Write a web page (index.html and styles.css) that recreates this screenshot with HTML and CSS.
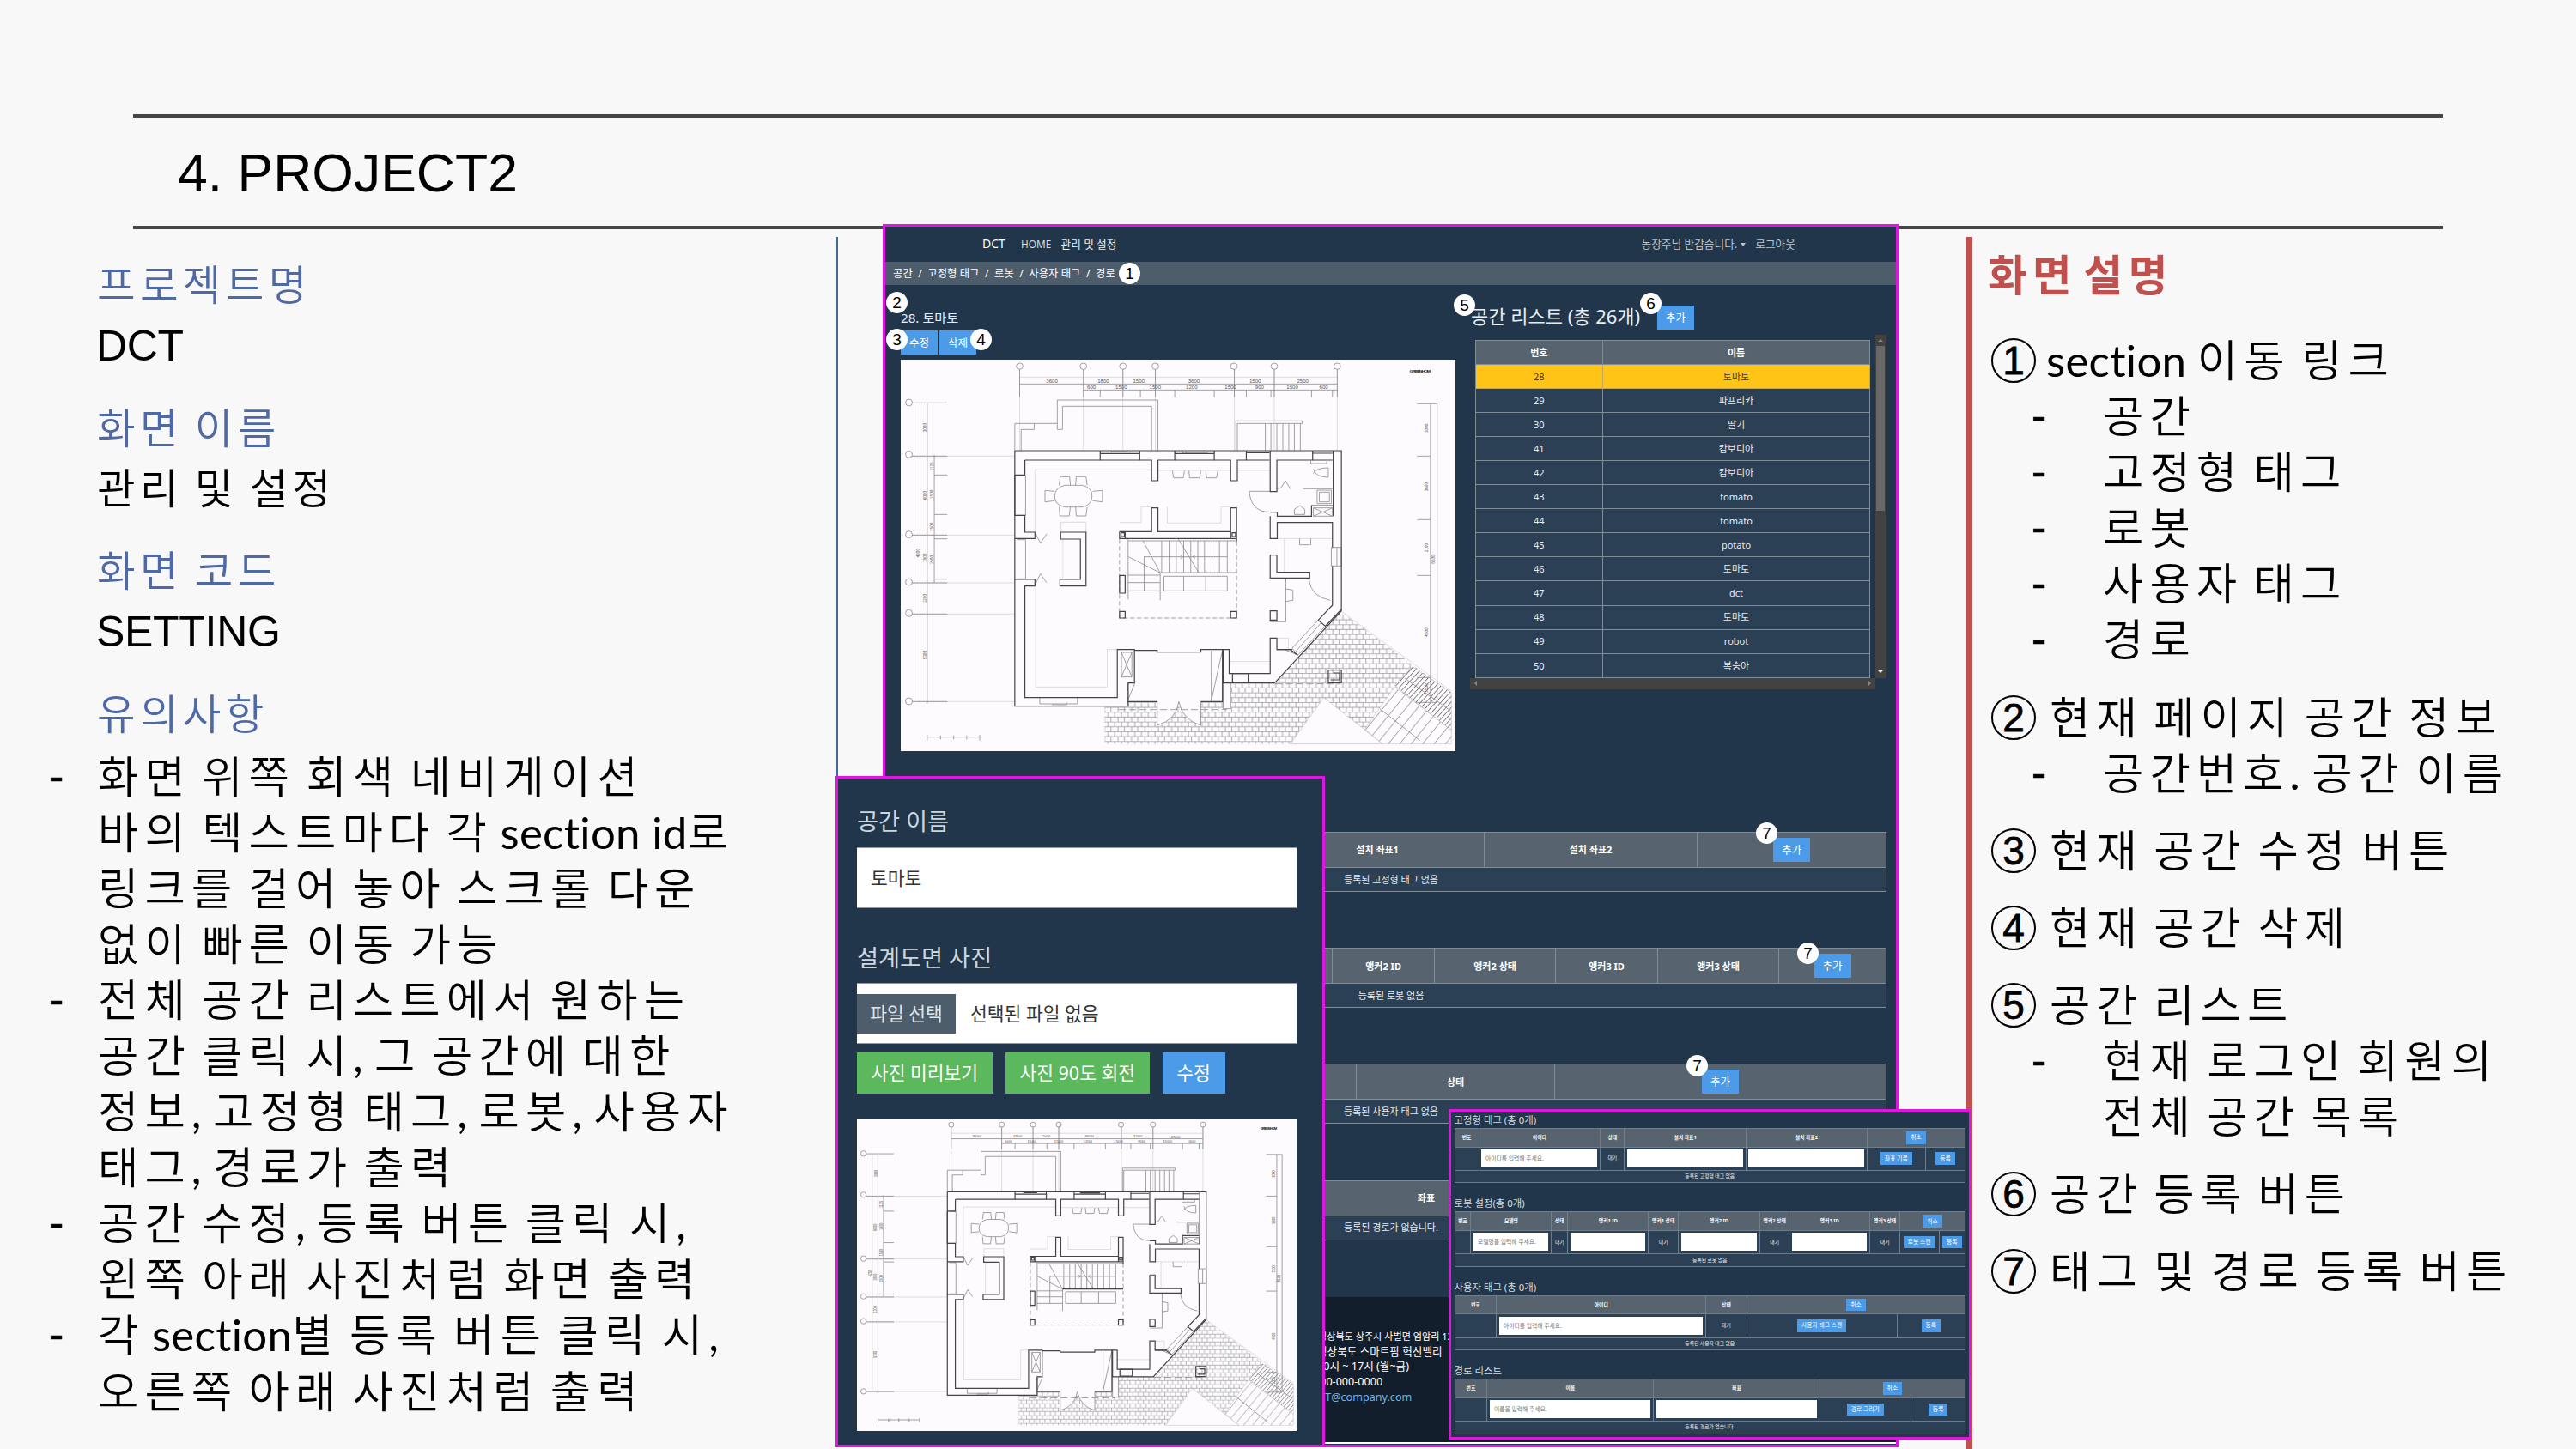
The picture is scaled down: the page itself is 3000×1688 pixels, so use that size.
FILE: index.html
```html
<!DOCTYPE html>
<html lang="ko">
<head>
<meta charset="utf-8">
<title>4. PROJECT2</title>
<link rel="stylesheet" href="styles.css">
</head>
<body>
<svg class="defs" width="0" height="0" aria-hidden="true">
  <defs>
    <pattern id="bricks" width="36" height="34" patternUnits="userSpaceOnUse">
      <path d="M0 1H36M0 18H36M7 1V18M25 1V18M16 18V34M33 18V34" fill="none" stroke="#777" stroke-width="1.6"/>
    </pattern>
    <pattern id="planks" width="26" height="26" patternUnits="userSpaceOnUse" patternTransform="rotate(32)">
      <path d="M1 0V26" stroke="#888" stroke-width="2"/>
    </pattern>
    <pattern id="hatch" width="11" height="11" patternUnits="userSpaceOnUse" patternTransform="rotate(35)">
      <path d="M1 0V11" stroke="#777" stroke-width="2.4"/>
    </pattern>
    <symbol id="plan" viewBox="45 27 1488 1368" preserveAspectRatio="none">
      <rect x="45" y="27" width="1488" height="1368" fill="#fdfbfe"/>
      <path d="M592 1240H655V1225H910V1247H930V1160L1050 1158L1225 905L1522 1195V1370H592Z" fill="url(#bricks)"/>
      <path d="M1180 1208L1338 1370H1090Z" fill="#fdfbfe" stroke="#999"/>
      <path d="M1418 1100L1522 1190V1322L1370 1165Z" fill="#fdfbfe"/>
      <path d="M1418 1100L1522 1190V1322L1370 1165Z" fill="url(#hatch)" stroke="#999"/>
      <path d="M1370 1170L1522 1322V1370H1338L1290 1318Z" fill="#fdfbfe"/>
      <path d="M1370 1170L1522 1322V1370H1338L1290 1318Z" fill="url(#planks)" stroke="#aaa"/>
      <g class="ink faint">
        <path d="M364 88H1216M364 60V345M535 60V345M641 60V345M728 60V345M940 60V345M1047 60V345M1216 60V345"/>
        <path d="M75 364H350M75 640H350M75 807H350M75 916H350M75 1222H350M97 178V1222M405 412H717M735 414H930M948 414H1036M405 412V630M407 820V1171H599V1040H626M632 596H690V541H718M760 541V598H904V541H930M475 630V595H542V630M1055 652H1203M1074 652V770M480 652V795M924 1082H1036M1055 1000H1085V1040"/>
        <path d="M1225 905L1522 1185"/>
      </g>
      <g class="ink mid">
        <path d="M364 112H1216M535 133H1216M364 60V158M535 60V158M580 133V158M641 60V158M688 133V158M728 60V158M780 133V158M886 133V158M940 60V158M972 133V158M1038 133V158M1047 60V158M1147 133V158M1203 133V158M1216 60V158"/>
        <path d="M75 178H170M116 178V1230M135 360V807M75 364H170M135 430H170M135 568H170M75 640H170M135 653H170M135 794H170M75 807H170M75 916H170M75 1222H170"/>
        <path d="M1430 181H1484V1225H1430M1466 181V1225M1430 364H1466M1430 586H1466M1430 781H1466M1430 1138H1466"/>
        <path d="M351 345V250H465V168H735V345M368 345V271H403V250M465 250V271H479V190H718V345"/>
        <path d="M944 345V241H1122V250H948V345M1023 250V345M1038 250V345M1054 250V345M1070 250V345M1086 250V345M1101 250V345M1117 250V345"/>
        <path d="M116 1346H257M116 1338V1358M152 1340V1354M187 1340V1354M222 1340V1354M257 1338V1358"/>
        <path d="M470 466L473 436H498L500 466M514 466L516 436H542L545 466M470 542L472 573H497L500 542M514 542L516 573H542L545 542M458 487L432 484V524L458 520M560 487L586 484V524L560 520"/>
        <path d="M485 466H532Q560 474 558 505Q558 535 532 542H485Q458 535 458 505Q458 474 485 466Z"/>
        <path d="M774 415L777 440H803L806 415M818 415L820 440H847L850 415M863 415L866 440H892L896 415"/>
        <path d="M980 487H1036M980 487Q984 558 1034 560M1055 478L1065 475L1077 450L1090 478M1125 478H1203M1152 409Q1158 438 1192 438V405Q1158 405 1152 425M1145 380V390H1188V380M1162 483H1200V530H1162ZM1168 490H1195V524H1168ZM1101 568V550L1116 537L1129 550V568Z"/>
        <path d="M405 630L420 668L437 635M405 815L420 775L436 806"/>
        <path d="M1115 652V674H1145V652M1078 790V943H1036M1078 828L1097 832V868L1078 872M1140 795Q1145 855 1197 868M655 655V865M741 772V868M655 780H741M655 806H741M655 835H741M698 715V835M656 660H946M656 716L741 772M695 660L741 772M790 655L845 772"/>
        <path d="M745 660V770M765 660V770M784 660V770M804 660V770M823 660V770M842 660V770M860 660V770M880 660V770M900 660V770M921 660V770M698 716H921M795 710L802 716L795 722M835 710L828 716L835 722"/>
        <path d="M751 784H921V835H751ZM804 784V835M863 784V835"/>
        <path d="M637 1050H665V1136H637ZM637 1050L665 1136M665 1050L637 1136M878 1045V1220L907 1048M655 1158V1225M673 1158L655 1215"/>
        <path d="M733 1222V1305Q785 1285 791 1222M850 1222V1305Q800 1285 791 1222" fill="#fdfbfe"/>
        <path d="M1165 937L1095 1035L1110 1060L1184 958M1172 948L1104 1048M1330 1247L1438 1358M1397 1140L1520 1254"/>
        <path d="M632 655V930H946V655" stroke-dasharray="5 3"/>
        <path d="M630 1250H920M1050 1160H1225" stroke-dasharray="8 4"/>
        <path d="M357 432H380V571H357M357 656H380V793H357M1200 683H1227V748H1200ZM1215 683V748M418 1208V1230H519V1208M450 1233H490V1225"/>
        <path d="M910 1157V1247H930V1157M1152 545H1203V574H1152ZM1152 545L1203 574M1203 545L1152 574M1075 1040L1110 1060"/>
      </g>
      <g class="ink wall">
        <path d="M351 345H1227V905L1048 1157H910V1040H926V1124H1036V1000H1054V1040H1095M351 345V1238H655V1222M378 378V430H351M378 378H580V345M686 345V378H718V450H735V378H780V345M886 345V378H930V450H948V378H972V345M1036 345V488H1054V378H1150V345M1205 345V574"/>
        <path d="M580 355H686M608 349H655M780 355H886M800 350H868M972 352H1034M1150 354H1203M580 378H686M780 378H886M972 378H1034M1150 378H1203"/>
        <path d="M351 430V571H378V630H405V652H351M351 793V795H405V818H378V1208H626V1040H672V1157H655V1222H733M850 1222H908V1040M672 1043H733V1049H850V1040H910M474 630H542V818H472V795H527V654H474Z"/>
        <path d="M632 628H718V545H735V628H930V545H946V662M632 628V652H946M632 628H647V650M930 628V650M636 632H645V645H636ZM934 632H943V645H934Z"/>
        <path d="M632 781H647V843H632ZM632 907H647V930H632ZM930 907H946V930H930ZM1036 905H1054V937H1036ZM741 772H946"/>
        <path d="M1036 560H1055V574H1147V537H1203M1036 574V652H1055V596H1203V683M1036 710H1054V770H1142V790H1036V710M1203 748V885L1165 937L1184 958L1227 900M1054 1040H1090L1110 1060M935 1124H977V1154H935ZM1192 1112H1227V1156H1192ZM1205 1122H1222V1146H1198"/>
      </g>
      <g class="ink mid" fill="#fdfbfe">
        <ellipse cx="364" cy="50" rx="9" ry="11"/><ellipse cx="535" cy="50" rx="9" ry="11"/><ellipse cx="641" cy="50" rx="9" ry="11"/><ellipse cx="728" cy="50" rx="9" ry="11"/><ellipse cx="939" cy="50" rx="9" ry="11"/><ellipse cx="1047" cy="50" rx="9" ry="11"/><ellipse cx="1216" cy="50" rx="9" ry="11"/>
        <ellipse cx="67" cy="177" rx="9" ry="12"/><ellipse cx="67" cy="358" rx="9" ry="12"/><ellipse cx="67" cy="638" rx="9" ry="12"/><ellipse cx="67" cy="804" rx="9" ry="12"/><ellipse cx="67" cy="913" rx="9" ry="12"/><ellipse cx="67" cy="1221" rx="9" ry="12"/>
      </g>
      <g class="dims">
        <text x="435" y="108">3600</text><text x="573" y="108">1800</text><text x="668" y="108">1500</text><text x="816" y="108">3600</text><text x="980" y="108">1500</text><text x="1108" y="109">2500</text>
        <text x="545" y="130">600</text><text x="621" y="130">1500</text><text x="712" y="130">1500</text><text x="810" y="130">1200</text><text x="914" y="130">1500</text><text x="996" y="130">900</text><text x="1080" y="130">1500</text><text x="1168" y="130">600</text>
        <text transform="translate(114 280) rotate(-90)">3000</text><text transform="translate(132 415) rotate(-90)">1125</text><text transform="translate(113 517) rotate(-90)">6000</text><text transform="translate(132 513) rotate(-90)">1500</text><text transform="translate(132 627) rotate(-90)">1500</text><text transform="translate(95 718) rotate(-90)">4200</text><text transform="translate(113 735) rotate(-90)">1800</text><text transform="translate(132 742) rotate(-90)">1500</text><text transform="translate(113 877) rotate(-90)">1200</text><text transform="translate(113 1075) rotate(-90)">5300</text>
        <text transform="translate(1460 282) rotate(-90)">3000</text><text transform="translate(1460 487) rotate(-90)">3600</text><text transform="translate(1460 700) rotate(-90)">2100</text><text transform="translate(1478 740) rotate(-90)">8100</text><text transform="translate(1460 995) rotate(-90)">4500</text><text transform="translate(1460 1190) rotate(-90)">1500</text>
        <text class="strong" x="1410" y="73">GREENHOM</text>
      </g>
    </symbol>
  </defs>
</svg>

<div class="slide">
  <header class="title">4. PROJECT2</header>

  <div class="columns">
    <aside class="info">
      <dl>
        <dt>프로젝트명</dt><dd class="latin">DCT</dd>
        <dt>화면 이름</dt><dd>관리 및 설정</dd>
        <dt>화면 코드</dt><dd class="latin">SETTING</dd>
        <dt>유의사항</dt>
      </dl>
      <ul class="notes">
        <li>화면 위쪽 회색 네비게이션<br>바의 텍스트마다 각 <span class="en">section id</span>로<br>링크를 걸어 놓아 스크롤 다운<br>없이 빠른 이동 가능</li>
        <li>전체 공간 리스트에서 원하는<br>공간 클릭 시<span class="c">,</span> 그 공간에 대한<br>정보<span class="c">,</span> 고정형 태그<span class="c">,</span> 로봇<span class="c">,</span> 사용자<br>태그<span class="c">,</span> 경로가 출력</li>
        <li>공간 수정<span class="c">,</span> 등록 버튼 클릭 시<span class="c">,</span><br>왼쪽 아래 사진처럼 화면 출력</li>
        <li>각 <span class="en">section</span>별 등록 버튼 클릭 시<span class="c">,</span><br>오른쪽 아래 사진처럼 출력</li>
      </ul>
    </aside>

    <aside class="legend">
      <h2>화면 설명</h2>
      <ol>
        <li><b class="num">1</b><span class="en">section</span> 이동 링크
          <ul><li>공간</li><li>고정형 태그</li><li>로봇</li><li>사용자 태그</li><li>경로</li></ul></li>
        <li><b class="num">2</b>현재 페이지 공간 정보
          <ul><li>공간번호<span class="c">.</span> 공간 이름</li></ul></li>
        <li><b class="num">3</b>현재 공간 수정 버튼</li>
        <li><b class="num">4</b>현재 공간 삭제</li>
        <li><b class="num">5</b>공간 리스트
          <ul><li>현재 로그인 회원의<br>전체 공간 목록</li></ul></li>
        <li><b class="num">6</b>공간 등록 버튼</li>
        <li><b class="num">7</b>태그 및 경로 등록 버튼</li>
      </ol>
    </aside>
  </div>

  <section class="window main">
    <nav class="nav">
      <span class="brand">DCT</span><span class="home">HOME</span><span class="here">관리 및 설정</span>
      <span class="hello">농장주님 반갑습니다.</span><i class="caret"></i><span class="logout">로그아웃</span>
    </nav>
    <div class="crumbs">공간&nbsp; /&nbsp; 고정형 태그&nbsp; /&nbsp; 로봇&nbsp; /&nbsp; 사용자 태그&nbsp; /&nbsp; 경로</div>
    <div class="top">
      <div class="space">
        <h3>28. 토마토</h3>
        <div class="btns"><span class="btn">수정</span><span class="btn">삭제</span></div>
        <svg class="plan"><use href="#plan"/></svg>
      </div>
      <div class="list">
        <div class="head"><h3>공간 리스트 (총 26개)</h3><span class="btn">추가</span></div>
        <div class="scroller">
          <div class="rows">
            <div class="th">번호</div><div class="th">이름</div>
            <div class="on">28</div><div class="on">토마토</div>
            <div>29</div><div>파프리카</div>
            <div>30</div><div>딸기</div>
            <div>41</div><div>캄보디아</div>
            <div>42</div><div>캄보디아</div>
            <div>43</div><div>tomato</div>
            <div>44</div><div>tomato</div>
            <div>45</div><div>potato</div>
            <div>46</div><div>토마토</div>
            <div>47</div><div>dct</div>
            <div>48</div><div>토마토</div>
            <div>49</div><div>robot</div>
            <div>50</div><div>복숭아</div>
          </div>
          <div class="vbar"><i class="up"></i><i class="thumb"></i><i class="down"></i></div>
          <div class="hbar"><i class="left"></i><i class="right"></i></div>
        </div>
      </div>
    </div>
    <div class="tables">
      <div class="tbl m1"><div class="th"></div><div class="th">설치 좌표1</div><div class="th">설치 좌표2</div><div class="th"><span class="btn">추가</span></div><div class="full">등록된 고정형 태그 없음</div></div>
      <div class="tbl m2"><div class="th"></div><div class="th">앵커2 ID</div><div class="th">앵커2 상태</div><div class="th">앵커3 ID</div><div class="th">앵커3 상태</div><div class="th"><span class="btn">추가</span></div><div class="full">등록된 로봇 없음</div></div>
      <div class="tbl m3"><div class="th"></div><div class="th">상태</div><div class="th"><span class="btn">추가</span></div><div class="full">등록된 사용자 태그 없음</div></div>
      <div class="tbl m4"><div class="th"></div><div class="th">좌표</div><div class="th"></div><div class="full">등록된 경로가 없습니다.</div></div>
    </div>
    <footer class="foot">
      <p class="addr">경상북도 상주시 사벌면 엄암리 13</p>
      <p>경상북도 스마트팜 혁신밸리</p>
      <p>10시 ~ 17시 (월~금)</p>
      <p class="tel">000-000-0000</p>
      <p class="mail">BT@company.com</p>
    </footer>
    <i class="badge b1">1</i><i class="badge b2">2</i><i class="badge b3">3</i><i class="badge b4">4</i><i class="badge b5">5</i><i class="badge b6">6</i><i class="badge b7">7</i><i class="badge b8">7</i><i class="badge b9">7</i>
  </section>

  <section class="window form">
    <h4>공간 이름</h4>
    <div class="field">토마토</div>
    <h4 class="second">설계도면 사진</h4>
    <div class="field file"><span class="pick">파일 선택</span><span>선택된 파일 없음</span></div>
    <div class="actions"><span class="ok">사진 미리보기</span><span class="ok wide">사진 90도 회전</span><span class="edit">수정</span></div>
    <svg class="plan"><use href="#plan"/></svg>
  </section>

  <section class="window inset">
    <h5>고정형 태그 (총 0개)</h5>
    <div class="tbl s1">
      <div class="th">번호</div><div class="th">아이디</div><div class="th">상태</div><div class="th">설치 좌표1</div><div class="th">설치 좌표2</div><div class="th two"><span class="btn">취소</span></div>
      <div></div><div class="in"><p>아이디를 입력해 주세요.</p></div><div>대기</div><div class="in"><p></p></div><div class="in"><p></p></div><div><span class="btn">좌표 기록</span></div><div><span class="btn">등록</span></div>
      <div class="full">등록된 고정형 태그 없음</div>
    </div>
    <h5>로봇 설정(총 0개)</h5>
    <div class="tbl s2">
      <div class="th">번호</div><div class="th">모델명</div><div class="th">상태</div><div class="th">앵커1 ID</div><div class="th">앵커1 상태</div><div class="th">앵커2 ID</div><div class="th">앵커2 상태</div><div class="th">앵커3 ID</div><div class="th">앵커3 상태</div><div class="th two"><span class="btn">취소</span></div>
      <div></div><div class="in"><p>모델명을 입력해 주세요.</p></div><div>대기</div><div class="in"><p></p></div><div>대기</div><div class="in"><p></p></div><div>대기</div><div class="in"><p></p></div><div>대기</div><div><span class="btn">로봇 스캔</span></div><div><span class="btn">등록</span></div>
      <div class="full">등록된 로봇 없음</div>
    </div>
    <h5>사용자 태그 (총 0개)</h5>
    <div class="tbl s3">
      <div class="th">번호</div><div class="th">아이디</div><div class="th">상태</div><div class="th two"><span class="btn">취소</span></div>
      <div></div><div class="in"><p>아이디를 입력해 주세요.</p></div><div>대기</div><div><span class="btn">사용자 태그 스캔</span></div><div><span class="btn">등록</span></div>
      <div class="full">등록된 사용자 태그 없음</div>
    </div>
    <h5>경로 리스트</h5>
    <div class="tbl s4">
      <div class="th">번호</div><div class="th">이름</div><div class="th">좌표</div><div class="th two"><span class="btn">취소</span></div>
      <div></div><div class="in"><p>이름을 입력해 주세요.</p></div><div class="in"><p></p></div><div><span class="btn">경로 그리기</span></div><div><span class="btn">등록</span></div>
      <div class="full">등록된 경로가 없습니다.</div>
    </div>
  </section>
</div>
</body>
</html>
```
FILE: styles.css
```css
* { box-sizing: border-box; margin: 0; padding: 0; }
ul, ol { list-style: none; }
i { font-style: normal; }
body { background: #f8f8f8; color: #000; overflow: hidden; }
.defs { position: absolute; }

.slide { position: relative; width: 3000px; height: 1688px; overflow: hidden; padding-top: 133px; }

.title {
  margin: 0 155px; height: 134px; padding-left: 52px;
  border-top: 4px solid #454545; border-bottom: 4px solid #454545;
  font: 62.5px/128px "Liberation Sans", sans-serif;
}

.columns { display: flex; justify-content: space-between; margin-top: 9px; height: 1412px; }

/* left column */
.info { width: 976px; height: 700px; border-right: 2px solid #41699c; padding: 20px 0 0 113px; }
.info dl { font: 350 48.5px/70px Lato, "Noto Sans CJK KR", sans-serif; letter-spacing: 5.3px; word-spacing: -4.5px; white-space: nowrap; }
.info dt { height: 70px; color: #4f69a6; }
.info dd { height: 70px; margin-bottom: 26.5px; }
.info dd.latin { font: 50px/74px "Liberation Sans", sans-serif; letter-spacing: -0.3px; margin-left: -1px; }
.notes { margin-top: 6px; }
.notes, .legend ol { font: 350 51.5px/65.1px Lato, "Noto Sans CJK KR", sans-serif; letter-spacing: 7px; word-spacing: -8.5px; white-space: nowrap; }
.notes li, .legend ol ul li { position: relative; }
.notes li { padding-left: 1px; }
.notes li::before { content: "-"; position: absolute; left: -57px; font-weight: 400; -webkit-text-stroke: .6px #000; }
.en { font-weight: 400; font-size: 51px; line-height: 1; letter-spacing: .3px; word-spacing: 0; margin-left: -4px; }
.c { letter-spacing: 1px; font-weight: 400; }

/* right column */
.legend { width: 710px; border-left: 7px solid #c0504d; padding: 11px 0 0 18px; }
.legend h2 { font: 700 49.5px/66px Lato, "Noto Sans CJK KR", sans-serif; letter-spacing: 6.5px; word-spacing: -11px; color: #c0504d; height: 100px; }
.legend ol > li { margin-bottom: 25px; padding-left: 4px; }
.legend ol ul { padding-left: 130px; }
.legend ol ul li::before { content: "-"; position: absolute; left: -84px; font-weight: 400; -webkit-text-stroke: .6px #000; }
.num {
  display: inline-block; width: 52px; height: 52px; margin: -8px 16px -8px 0; border: 2px solid #000; border-radius: 50%;
  font: 400 46px/48px "Liberation Sans", sans-serif; letter-spacing: 0; text-align: center; vertical-align: 3px;
  -webkit-text-stroke: .8px #000;
}

/* captured windows */
.window { position: absolute; border: 3px solid #e015e0; background: #21364a; color: #e8edf2; font: 11px/1.2 "Noto Sans", "Noto Sans CJK KR", sans-serif; white-space: nowrap; overflow: hidden; }
.btn { display: inline-flex; align-items: center; justify-content: center; background: #4c9be8; color: #fff; }
.plan { display: block; }
.ink * { vector-effect: non-scaling-stroke; }
.ink { fill: none; }
.faint { stroke: #d3d0d4; stroke-width: .7px; }
.mid { stroke: #8b898d; stroke-width: .8px; }
.wall { stroke: #454347; stroke-width: 1.2px; }
.dims { font: 14px "Liberation Sans", sans-serif; fill: #555; }
.dims .strong { font-size: 12px; font-weight: 700; letter-spacing: -2px; fill: #111; }

.tbl, .rows { display: grid; border: solid #7f8d99; border-width: 1px 0 0 1px; }
.tbl > div, .rows > div { min-width: 0; display: flex; align-items: center; justify-content: center; background: #2b4055; border: solid #7f8d99; border-width: 0 1px 1px 0; overflow: hidden; }
.tbl > .th, .rows > .th { background: #576470; font-weight: 700; color: #fff; }
.tbl > .full { grid-column: 1 / -1; }
.tbl > .two { grid-column: span 2; }

/* management page */
.main { left: 1028px; top: 261px; width: 1183px; height: 1425px; background: #21364a; }
.nav { display: flex; align-items: center; height: 41px; padding-left: 113px; font-size: 12.7px; color: #d6dce2; }
.brand { width: 45px; font-size: 14px; color: #fff; }
.home { width: 46.5px; font-size: 11.8px; }
.here { color: #e8edf2; }
.hello { margin-left: 611px; color: #bcc5ce; }
.caret { border: 3px solid transparent; border-top: 4px solid #bcc5ce; border-bottom: 0; margin: 0 11px 0 4px; }
.logout { color: #bcc5ce; }
.crumbs { height: 27px; padding-left: 9px; background: #4e5d6c; font-size: 12.4px; line-height: 27px; color: #fff; }
.top { display: flex; height: 637px; }
.space { width: 681px; padding: 28px 0 0 18px; }
.space h3 { font-size: 15.2px; font-weight: 400; line-height: 20px; height: 25px; }
.btns { display: flex; gap: 2px; margin-bottom: 6px; }
.main .btn { width: 43px; height: 28px; font-size: 12.5px; font-weight: 400; }
.space .plan { width: 646px; height: 456px; }
.head { display: flex; padding: 24px 0 0 1px; height: 58px; }
.head h3 { width: 217px; font-size: 22px; font-weight: 400; line-height: 24px; }
.scroller { display: grid; grid-template: 400px 12.5px / 471.5px 13px; }
.rows { margin: 6px 5.5px 0 5.5px; grid-template-columns: 148.5px 1fr; grid-auto-rows: 28.05px; overflow: hidden; height: 394px; }
.rows > .on { background: #ffc415; color: #4a3c14; border-color: #c0a760; }
.vbar { background: #424242; display: flex; flex-direction: column; align-items: center; }
.thumb { width: 9.5px; height: 192px; background: #686868; margin-bottom: auto; }
.up { border: 3px solid transparent; border-bottom-color: #888; margin: 2px 0 5px; }
.down { border: 3px solid transparent; border-top-color: #eee; margin-bottom: 3px; }
.hbar { background: #424242; display: flex; justify-content: space-between; align-items: center; padding: 0 2px; }
.left { border: 3px solid transparent; border-right-color: #888; }
.right { border: 3px solid transparent; border-left-color: #888; }
.tables { height: 542px; padding: 0 11px 0 12px; display: flex; flex-direction: column; gap: 66.2px; }
.tables .tbl { grid-template-rows: 41px 28px; height: 69px; flex: none; }
.m1 { grid-template-columns: 436.5fr 249fr 248.2fr 220.1fr; }
.m2 { grid-template-columns: 508.6fr 118.8fr 141.3fr 118.8fr 141.3fr 125fr; }
.m3 { grid-template-columns: 536.3fr 231.5fr 386fr; }
.m4 { grid-template-columns: 461fr 314fr 379fr; }
.foot { height: 171px; border-bottom: 2px solid #fff; background: #121e2b; padding: 37px 0 0 503px; font-size: 12.6px; line-height: 17.6px; color: #fff; }
.foot .addr { font-size: 11.1px; padding-left: 1px; }
.foot .tel { margin-left: -4px; }
.foot .mail { color: #69b7ef; padding: 1px 0 0 1px; }
.badge { position: absolute; width: 25px; height: 25px; border-radius: 50%; background: #fff; color: #000; font: 19px/25px "Liberation Sans", sans-serif; text-align: center; }
.b1 { left: 272px; top: 42px; }
.b2 { left: 1px; top: 76px; }
.b3 { left: 1px; top: 119px; }
.b4 { left: 99px; top: 119px; }
.b5 { left: 662px; top: 79px; }
.b6 { left: 879px; top: 77px; }
.b7 { left: 1014px; top: 694px; }
.b8 { left: 1062px; top: 834px; }
.b9 { left: 933px; top: 965px; }

/* edit form */
.form { left: 973px; top: 904px; width: 570px; height: 782px; padding: 33px 30px 0 22px; font-size: 21.5px; }
.form h4 { font-size: 27.2px; font-weight: 400; line-height: 34px; height: 47px; color: #cdd6df; }
.form h4.second { margin-top: 41px; height: 46px; }
.field { height: 71px; padding-left: 16px; background: #fff; color: #333; display: flex; align-items: center; border: solid #8d99a4; border-width: 1px 0; }
.file { padding-left: 0; }
.pick { width: 115px; height: 46px; margin-right: 17px; background: #4e5d6c; color: #dfe5ea; display: flex; align-items: center; justify-content: center; }
.actions { display: flex; gap: 15px; margin: 10px 0 30px; color: #fff; line-height: 48px; text-align: center; }
.ok { width: 158px; background: #5cb85c; }
.ok.wide { width: 167.5px; }
.edit { width: 73px; background: #4c9be8; }
.form .plan { width: 512px; height: 363px; }
.form .wall { stroke: #666; }

/* entry tables */
.inset { left: 1687px; top: 1292px; width: 609px; height: 385px; padding: 0 4px 0 3.5px; font-size: 5.8px; }
.inset h5 { height: 19px; font-size: 11.4px; font-weight: 400; line-height: 19px; color: #d5dde5; }
.inset .tbl { grid-template-rows: 21.5px 27.5px 14.4px; margin-bottom: 14px; border-color: #6d7d8b; }
.inset .tbl > div { border-color: #6d7d8b; }
.inset .btn { height: 14.7px; padding: 0 5px; font-size: 6.8px; font-weight: 400; }
.inset .in { padding: 2.5px 3px 3px 2.5px; }
.in p { width: 100%; height: 100%; background: #fff; color: #777; padding-left: 5px; font-size: 6.8px; line-height: 21px; overflow: hidden; }
.s1 { grid-template-columns: 71fr 359fr 71fr 359fr 357fr 172fr 117fr; }
.s2 { grid-template-columns: 48fr 238fr 48fr 238fr 88fr 241fr 86fr 239fr 87fr 116fr 77fr; }
.s3 { grid-template-columns: 124fr 617fr 121fr 443fr 201fr; }
.s4 { grid-template-columns: 96fr 491fr 490fr 269fr 160fr; }
```
